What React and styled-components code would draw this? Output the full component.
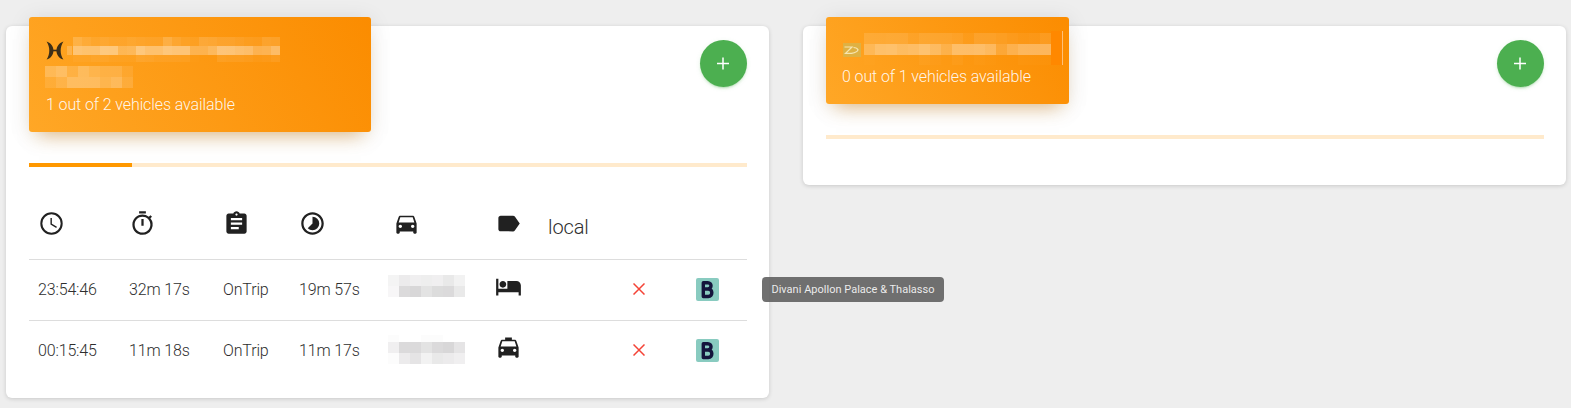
import React from "react";
import styled, { createGlobalStyle } from "styled-components";
import {
  MdOutlineTimer,
  MdAssignment,
  MdTimelapse,
  MdDirectionsCar,
  MdLabel,
  MdHotel,
  MdLocalTaxi,
} from "react-icons/md";

const GlobalStyle = createGlobalStyle`
  * { box-sizing: border-box; }
  body {
    margin: 0;
    background: #eeeeee;
    font-family: Roboto, "Liberation Sans", sans-serif;
    font-weight: 300;
    font-size: 16px;
    color: #212121;
    overflow: hidden;
  }
`;

const Page = styled.main`
  display: flex;
  align-items: flex-start;
  gap: 34px;
  height: 408px;
  padding: 26px 5px 0 6px;
`;

const Card = styled.section`
  width: 763px;
  height: ${(p) => p.$height}px;
  flex: none;
  padding: 0 22px 0 23px;
  background: #fff;
  border-radius: 6px;
  box-shadow: 0 1px 4px rgba(0, 0, 0, 0.16);
`;

const CardTop = styled.div`
  display: flex;
  justify-content: space-between;
  align-items: flex-start;
`;

const CardHeader = styled.header`
  width: ${(p) => p.$width}px;
  height: ${(p) => p.$height}px;
  margin-top: -9px;
  padding: ${(p) => p.$padTop}px 0 0 16px;
  border-radius: 3px;
  color: rgba(255, 255, 255, 0.92);
  background: linear-gradient(60deg, #ffa726, #fb8c00);
  box-shadow: 0 3px 22px rgba(0, 0, 0, 0.1), 0 12px 18px -10px rgba(225, 140, 20, 0.5);
`;

const TitleRow = styled.div`
  display: flex;
  align-items: flex-start;
  height: ${(p) => p.$height}px;
`;

const Availability = styled.p`
  margin: 0;
  padding-left: ${(p) => p.$indent || 0}px;
  line-height: 24px;
  letter-spacing: -0.11px;
  white-space: nowrap;
`;

const AddButton = styled.button`
  display: flex;
  align-items: center;
  justify-content: center;
  width: 47px;
  height: 47px;
  margin-top: 14px;
  padding: 0 1px 0 0;
  border: 0;
  border-radius: 50%;
  background: #4caf50;
  box-shadow: 0 2px 2px rgba(76, 175, 80, 0.14), 0 3px 1px -2px rgba(76, 175, 80, 0.2),
    0 1px 5px rgba(76, 175, 80, 0.12);
`;

const Track = styled.div`
  height: 4px;
  margin-top: 31px;
  background: #ffeacc;
`;

const Fill = styled.div`
  width: ${(p) => p.$value}%;
  height: 100%;
  background: #ff9800;
`;

const Blocks = styled.div`
  display: grid;
  flex: none;
  grid-template-columns: repeat(${(p) => p.$cols}, ${(p) => p.$size}px);
  grid-template-rows: ${(p) => p.$rows};
  margin-left: ${(p) => p.$left || 0}px;
`;

const Block = styled.i`
  background: rgba(${(p) => p.$tone}, ${(p) => p.$alpha / 100});
`;

const Sliver = styled.span`
  flex: none;
  width: 5px;
  height: 9px;
  margin: 9px 0 0 3px;
  background: rgba(255, 255, 255, 0.2);
`;

const Caret = styled.span`
  flex: none;
  width: 12px;
  height: 34px;
  margin-top: -2px;
  border-right: 1px solid #ffc078;
  background: #ff8800;
`;

const LogoSlot = styled.span`
  display: flex;
  flex: none;
  margin-top: ${(p) => p.$top}px;
  margin-left: 1px;
`;

const Table = styled.div`
  margin-top: 32px;
`;

const Row = styled.div`
  display: grid;
  grid-template-columns: 91px 94px 76px 94px 102px 53px 85px 62px 61px;
  align-items: center;
  height: ${(p) => (p.$head ? 60 : 61)}px;
  border-top: ${(p) => (p.$head ? 0 : "1px solid #dddddd")};
`;

const Cell = styled.div`
  display: flex;
  align-items: center;
  padding-left: 9px;
  margin-top: ${(p) => p.$shift || 0}px;
  white-space: nowrap;
  letter-spacing: -0.15px;
  svg { flex: none; }
`;

const TextCell = styled(Cell)`
  color: #2e2e2e;
`;

const HeadText = styled.span`
  font-size: 20px;
  letter-spacing: -0.1px;
  color: #2e2e2e;
`;

const Tag = styled.span`
  display: flex;
  width: 23px;
  height: 23px;
  margin-left: 1px;
  border-radius: 2px;
  background: #89cbc0;
`;

const Tooltip = styled.div`
  position: absolute;
  left: 762px;
  top: 277px;
  width: 182px;
  height: 25px;
  border-radius: 4px;
  background: rgba(97, 97, 97, 0.9);
  color: rgba(255, 255, 255, 0.88);
  font-size: 11px;
  font-weight: 400;
  line-height: 26px;
  letter-spacing: 0.01px;
  text-align: center;
  white-space: nowrap;
`;

function Mosaic({ data, size, rows, left, tone = "255,255,255" }) {
  return (
    <Blocks $cols={data[0].length} $size={size} $rows={rows} $left={left}>
      {data.flat().map((alpha, i) => (
        <Block key={i} $alpha={alpha} $tone={tone} />
      ))}
    </Blocks>
  );
}

const nameLine = [
  [18, 12, 8, 10, 8, 8, 10, 9, 8, 8, 20, 12, 8, 7, 16, 15, 12, 12, 10, 8, 7, 14, 13],
  [38, 36, 36, 44, 43, 26, 28, 44, 38, 38, 44, 42, 42, 26, 26, 32, 44, 43, 40, 38, 28, 29, 38],
  [4, 4, 6, 6, 4, 3, 3, 9, 8, 6, 6, 6, 5, 1, 0, 0, 8, 7, 7, 6, 4, 5, 8],
];
const nameLineEnd = [
  [24, 30, 16, 28, 21, 18, 18, 9],
  [10, 18, 29, 29, 29, 22, 28, 14],
];
const shortName = [
  [12, 12, 13, 13, 8, 12, 12, 12, 10, 5, 12, 12, 10, 8, 6, 7, 11],
  [26, 35, 36, 32, 34, 39, 33, 24, 37, 37, 38, 34, 18, 28, 34, 34, 35],
  [1, 0, 0, 0, 0, 3, 2, 0, 3, 0, 2, 1, 0, 0, 2, 2, 2],
];
const plateA = [
  [5, 9, 7, 8, 7, 10, 6],
  [4, 17, 18, 13, 16, 17, 10],
];
const plateB = [
  [1, 0, 0, 1, 1, 0, 0],
  [7, 17, 17, 13, 17, 18, 12],
  [1, 9, 12, 6, 10, 9, 7],
];

const ClockIcon = ({ size }) => (
  <svg width={size} height={size} viewBox="0 0 24 24" fill="none" stroke="currentColor">
    <circle cx="12" cy="12" r="9.050" strokeWidth="1.800" />
    <path d="M11.700 7v5.600l4.800 2.900" strokeWidth="1.250" />
  </svg>
);

const PlusIcon = () => (
  <svg width="12" height="13" viewBox="0 0 12 13">
    <path d="M6 .4v12.200M0 6.500h12" stroke="#fff" strokeWidth="1.500" />
  </svg>
);

const CrossIcon = () => (
  <svg width="12" height="12" viewBox="0 0 12 12">
    <path d="M.5 .5l11 11M11.5 .5l-11 11" stroke="#f44336" strokeWidth="1.500" />
  </svg>
);

const WingsLogo = () => (
  <svg width="18" height="19" viewBox="0 0 18 19">
    <path
      d="M.6 .4C9.800 3.500 9.800 15.500 .6 18.600C4.200 13 4.200 6 .6 .4ZM17.400 .4C8.200 3.500 8.200 15.500 17.400 18.600C13.800 13 13.800 6 17.400 .4Z"
      fill="#3d2f18"
    />
    <path d="M7 9.500h4" stroke="#3d2f18" strokeWidth="1.600" />
  </svg>
);

const ArrowLogo = () => (
  <svg width="18" height="14" viewBox="0 0 18 14">
    <path d="M0 0h18v14H0z" fill="#dfb143" />
    <path
      d="M1.500 4h7.500L2.500 10.300h6Q14.500 9 15 6.800Q14 4.500 10.500 4.500"
      fill="none"
      stroke="#f7e5b0"
      strokeWidth="1.200"
    />
  </svg>
);

const BookingMark = () => (
  <svg width="23" height="23" viewBox="0 0 23 23">
    <path
      d="M7.300 4.700h4.500c4.300 0 4.300 6.300 0 6.300H7.300h5c4.700 0 4.700 7.500 0 7.500H7.300Z"
      fill="none"
      stroke="#14143c"
      strokeWidth="3.400"
      strokeLinejoin="round"
    />
  </svg>
);

const ICON = 27;
const headings = [ClockIcon, MdOutlineTimer, MdAssignment, MdTimelapse, MdDirectionsCar, MdLabel];

const trips = [
  { time: "23:54:46", wait: "32m 17s", left: "19m 57s", plate: plateA, rows: "11px 11px", shift: -8, Icon: MdHotel },
  { time: "00:15:45", wait: "11m 18s", left: "11m 17s", plate: plateB, rows: "7px 11px 11px", shift: -3, Icon: MdLocalTaxi },
];

export default function App() {
  return (
    <>
      <GlobalStyle />
      <Page>
        <Card $height={372}>
          <CardTop>
            <CardHeader $width={342} $height={115} $padTop={20}>
              <TitleRow $height={29}>
                <LogoSlot $top={4}><WingsLogo /></LogoSlot>
                <Sliver />
                <Mosaic data={nameLine} size={9} rows="9px 9px 7px" left={1} />
              </TitleRow>
              <TitleRow $height={27}>
                <Mosaic data={nameLineEnd} size={11} rows="11px 11px" />
              </TitleRow>
              <Availability $indent={1}>1 out of 2 vehicles available</Availability>
            </CardHeader>
            <AddButton aria-label="Add vehicle"><PlusIcon /></AddButton>
          </CardTop>
          <Track><Fill $value={14.35} /></Track>
          <Table>
            <Row $head>
              {headings.map((Icon, i) => (
                <Cell key={i} $shift={-12}><Icon size={ICON} /></Cell>
              ))}
              <Cell $shift={-4}><HeadText>local</HeadText></Cell>
            </Row>
            {trips.map(({ time, wait, left, plate, rows, shift, Icon }) => (
              <Row key={time}>
                <TextCell $shift={-2}>{time}</TextCell>
                <TextCell $shift={-2}>{wait}</TextCell>
                <TextCell $shift={-2}>OnTrip</TextCell>
                <TextCell $shift={-2}>{left}</TextCell>
                <Cell $shift={shift}>
                  <Mosaic data={plate} size={11} rows={rows} left={-5} tone="40,35,40" />
                </Cell>
                <Cell $shift={-8}><Icon size={ICON} /></Cell>
                <Cell />
                <Cell $shift={-2}><CrossIcon /></Cell>
                <Cell $shift={-2}><Tag><BookingMark /></Tag></Cell>
              </Row>
            ))}
          </Table>
        </Card>
        <Card $height={159}>
          <CardTop>
            <CardHeader $width={243} $height={87} $padTop={16}>
              <TitleRow $height={32}>
                <LogoSlot $top={10}><ArrowLogo /></LogoSlot>
                <Mosaic data={shortName} size={11} rows="11px 11px 10px" left={3} />
                <Caret />
              </TitleRow>
              <Availability>0 out of 1 vehicles available</Availability>
            </CardHeader>
            <AddButton aria-label="Add vehicle"><PlusIcon /></AddButton>
          </CardTop>
          <Track />
        </Card>
      </Page>
      <Tooltip role="tooltip">Divani Apollon Palace &amp; Thalasso</Tooltip>
    </>
  );
}
